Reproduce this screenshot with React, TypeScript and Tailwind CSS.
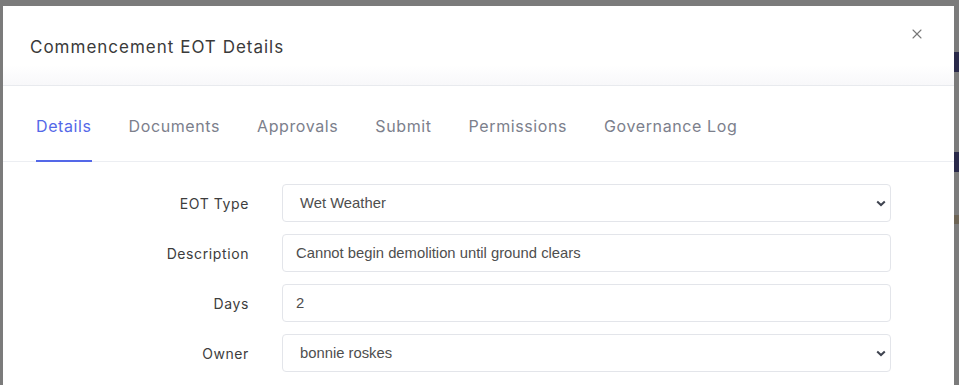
import { X } from 'lucide-react';

const tabs = ['Details', 'Documents', 'Approvals', 'Submit', 'Permissions', 'Governance Log'];

function Field({ label, children }: { label: string; children: React.ReactNode }) {
  return (
    <div className="flex items-center">
      <label className="w-[246px] shrink-0 text-right text-[14px] tracking-[0.6px] text-[#3d3d3d]">{label}</label>
      <div className="ml-[33px] w-[609px]">{children}</div>
    </div>
  );
}

function SelectBox({ value }: { value: string }) {
  return (
    <div className="flex h-[38px] items-center justify-between rounded border border-[#e3e5ea] bg-white pl-[17px] pr-[4px] font-['Liberation_Sans',Arial,sans-serif] text-[14.8px] text-[#4e4e4e]">
      <span>{value}</span>
      <svg width="10" height="7" viewBox="0 0 10 7">
        <path d="M1.2 1.4 L5 5 L8.8 1.4" fill="none" stroke="#3f4450" strokeWidth="2" />
      </svg>
    </div>
  );
}

function TextBox({ value }: { value: string }) {
  return (
    <div className="flex h-[38px] items-center rounded border border-[#e3e5ea] bg-white px-[13px] font-['Liberation_Sans',Arial,sans-serif] text-[14.8px] text-[#4e4e4e]">
      {value}
    </div>
  );
}

export default function App() {
  return (
    <div className="relative h-[385px] w-[959px] overflow-hidden bg-[#7b7b7b] font-['Inter',sans-serif]">
      {/* backdrop peeks */}
      <div className="absolute right-0 top-[52px] h-[20px] w-[5px] bg-[#2a2a4a]" />
      <div className="absolute right-0 top-[152px] h-[20px] w-[5px] bg-[#2a2a4a]" />
      <div className="absolute right-0 top-[215px] h-[9px] w-[5px] bg-[#6d6455]" />

      <div className="ml-[3px] mt-[6px] h-[400px] w-[951px] rounded-tr-md bg-white">
        <div className="flex h-[80px] items-start justify-between border-b border-[#e8eaee] bg-gradient-to-b from-white from-75% to-[#f8f8fa] pl-[27px] pr-[29px]">
          <h2 className="mt-[29px] text-[17px] tracking-[1px] text-[#3a3a3a]">Commencement EOT Details</h2>
          <X className="mt-[20px] h-[16px] w-[16px] text-[#777]" strokeWidth={1.6} />
        </div>

        <div className="flex h-[76px] items-center gap-[37px] border-b border-[#eceef2] pl-[33px] pt-[5px] text-[16px] tracking-[0.6px]">
          {tabs.map((t, i) => (
            <div key={t} className="relative flex h-full items-center">
              <span className={i === 0 ? 'text-[#5468e8]' : 'text-[#7c808c]'}>{t}</span>
              {i === 0 && <div className="absolute bottom-[-1px] left-0 right-0 h-[2px] bg-[#5468e8]" />}
            </div>
          ))}
        </div>

        <div className="flex flex-col gap-[12px] pt-[22px]">
          <Field label="EOT Type"><SelectBox value="Wet Weather" /></Field>
          <Field label="Description"><TextBox value="Cannot begin demolition until ground clears" /></Field>
          <Field label="Days"><TextBox value="2" /></Field>
          <Field label="Owner"><SelectBox value="bonnie roskes" /></Field>
        </div>
      </div>
    </div>
  );
}
